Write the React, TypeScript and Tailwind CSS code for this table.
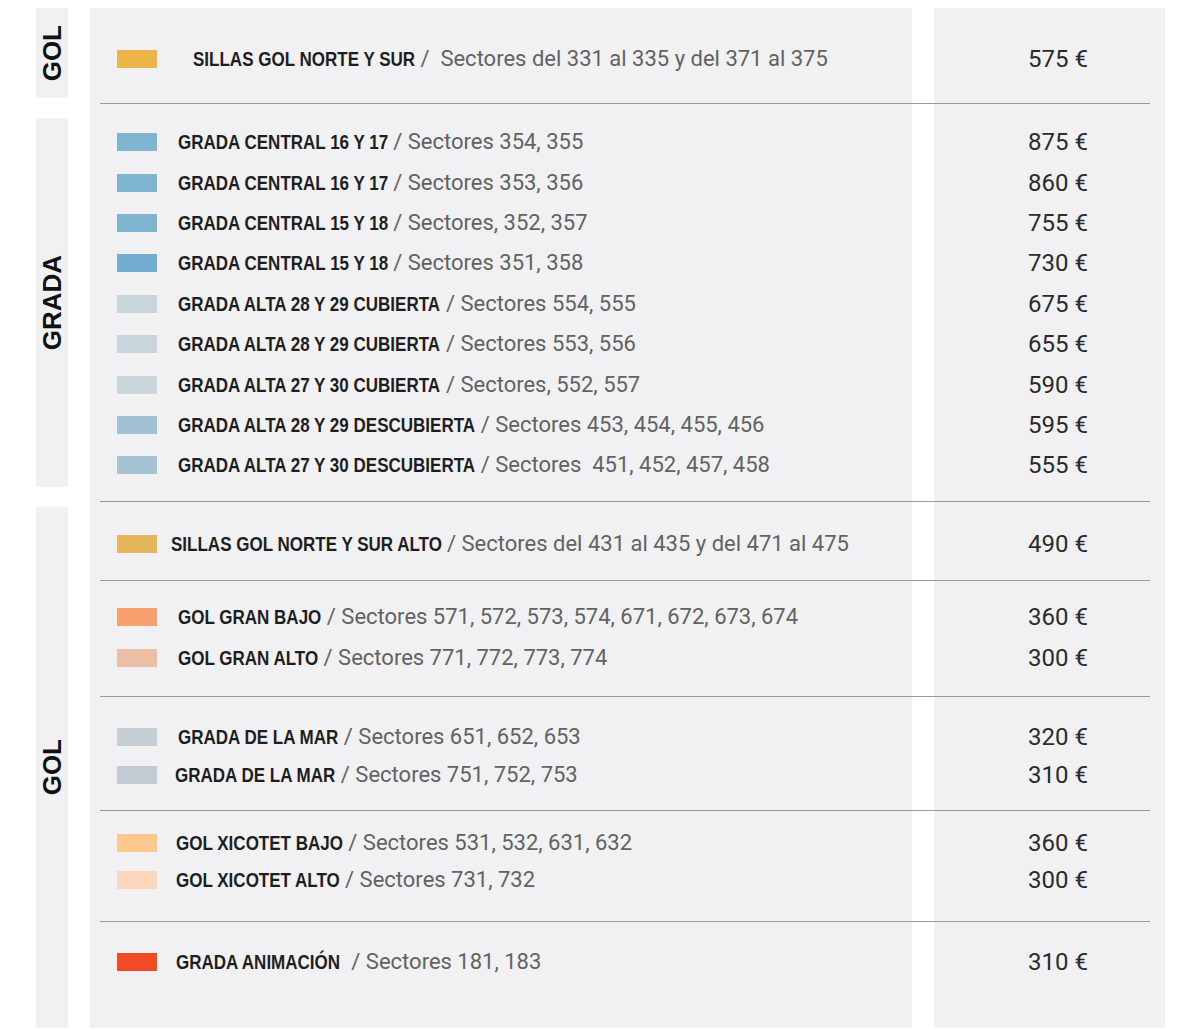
import React, { useLayoutEffect, useRef, useState } from "react";

type Row = {
  color: string;
  name: string;
  sectors: string;
  price: string;
  indent: string;
};

type Group = {
  height: string;
  pad: string;
  rowH: string;
  rows: Row[];
};

const groups: Group[] = [
  {
    height: "h-[95px]",
    pad: "pt-[31px]",
    rowH: "h-[40px]",
    rows: [
      {
        color: "bg-[#ebb54b]",
        name: "SILLAS GOL NORTE Y SUR",
        sectors: " /  Sectores del 331 al 335 y del 371 al 375",
        price: "575 €",
        indent: "ml-[36px]",
      },
    ],
  },
  {
    height: "h-[397px]",
    pad: "pt-[18px]",
    rowH: "h-[40.4px]",
    rows: [
      { color: "bg-[#80b5d1]", name: "GRADA CENTRAL 16 Y 17", sectors: " / Sectores 354, 355", price: "875 €", indent: "ml-[21px]" },
      { color: "bg-[#80b5d1]", name: "GRADA CENTRAL 16 Y 17", sectors: " / Sectores 353, 356", price: "860 €", indent: "ml-[21px]" },
      { color: "bg-[#80b5d1]", name: "GRADA CENTRAL 15 Y 18", sectors: " / Sectores, 352, 357", price: "755 €", indent: "ml-[21px]" },
      { color: "bg-[#72acd1]", name: "GRADA CENTRAL 15 Y 18", sectors: " / Sectores 351, 358", price: "730 €", indent: "ml-[21px]" },
      { color: "bg-[#c8d6dc]", name: "GRADA ALTA 28 Y 29 CUBIERTA", sectors: " / Sectores 554, 555", price: "675 €", indent: "ml-[21px]" },
      { color: "bg-[#c8d5da]", name: "GRADA ALTA 28 Y 29 CUBIERTA", sectors: " / Sectores 553, 556", price: "655 €", indent: "ml-[21px]" },
      { color: "bg-[#cbd6da]", name: "GRADA ALTA 27 Y 30 CUBIERTA", sectors: " / Sectores, 552, 557", price: "590 €", indent: "ml-[21px]" },
      { color: "bg-[#a0c2d2]", name: "GRADA ALTA 28 Y 29 DESCUBIERTA", sectors: " / Sectores 453, 454, 455, 456", price: "595 €", indent: "ml-[21px]" },
      { color: "bg-[#a6c3d3]", name: "GRADA ALTA 27 Y 30 DESCUBIERTA", sectors: " / Sectores  451, 452, 457, 458", price: "555 €", indent: "ml-[21px]" },
    ],
  },
  {
    height: "h-[78px]",
    pad: "pt-[22px]",
    rowH: "h-[40px]",
    rows: [
      { color: "bg-[#e8b65a]", name: "SILLAS GOL NORTE Y SUR ALTO", sectors: " / Sectores del 431 al 435 y del 471 al 475", price: "490 €", indent: "ml-[14px]" },
    ],
  },
  {
    height: "h-[115px]",
    pad: "pt-[15px]",
    rowH: "h-[41px]",
    rows: [
      { color: "bg-[#f9a070]", name: "GOL GRAN BAJO", sectors: " / Sectores 571, 572, 573, 574, 671, 672, 673, 674", price: "360 €", indent: "ml-[21px]" },
      { color: "bg-[#ebbfa5]", name: "GOL GRAN ALTO", sectors: " / Sectores 771, 772, 773, 774", price: "300 €", indent: "ml-[21px]" },
    ],
  },
  {
    height: "h-[113px]",
    pad: "pt-[21px]",
    rowH: "h-[38px]",
    rows: [
      { color: "bg-[#c6cfd3]", name: "GRADA DE LA MAR", sectors: " / Sectores 651, 652, 653", price: "320 €", indent: "ml-[21px]" },
      { color: "bg-[#c2cbd1]", name: "GRADA DE LA MAR", sectors: " / Sectores 751, 752, 753", price: "310 €", indent: "ml-[18px]" },
    ],
  },
  {
    height: "h-[110px]",
    pad: "pt-[13px]",
    rowH: "h-[37px]",
    rows: [
      { color: "bg-[#fdc88e]", name: "GOL XICOTET BAJO", sectors: " / Sectores 531, 532, 631, 632", price: "360 €", indent: "ml-[19px]" },
      { color: "bg-[#fcd7bd]", name: "GOL XICOTET ALTO", sectors: " / Sectores 731, 732", price: "300 €", indent: "ml-[19px]" },
    ],
  },
  {
    height: "h-[106px]",
    pad: "pt-[20px]",
    rowH: "h-[40px]",
    rows: [
      { color: "bg-[#f04a26]", name: "GRADA ANIMACIÓN", sectors: "  / Sectores 181, 183", price: "310 €", indent: "ml-[19px]" },
    ],
  },
];

// no condensed face is installed, so squeeze the bold name and give the
// box the narrowed width so the sectors text follows right after it
const SQUEEZE = 0.81;

function Narrow({ children }: { children: string }) {
  const ref = useRef<HTMLSpanElement>(null);
  const [width, setWidth] = useState<number | null>(null);

  useLayoutEffect(() => {
    if (ref.current) setWidth(ref.current.offsetWidth * SQUEEZE);
  }, [children]);

  return (
    <span className="inline-block" style={width ? { width } : undefined}>
      <span
        ref={ref}
        className="inline-block whitespace-pre origin-left scale-x-[0.81] font-['Liberation_Sans',sans-serif] font-bold text-[21px] text-[#1e1e1e]"
      >
        {children}
      </span>
    </span>
  );
}

function SideLabel({ text, height }: { text: string; height: string }) {
  return (
    <div className={`w-8 ${height} bg-[#f1f1f3] flex items-center justify-center`}>
      <span className="[writing-mode:vertical-rl] rotate-180 font-['Liberation_Sans',sans-serif] font-bold text-[26px] leading-none text-[#111]">
        {text}
      </span>
    </div>
  );
}

function PriceRow({ row, rowH }: { row: Row; rowH: string }) {
  return (
    <div className={`flex items-center ${rowH}`}>
      <div className="w-[822px] flex items-center">
        <div className={`ml-[27px] w-10 h-[18px] shrink-0 ${row.color}`} />
        <p className={`${row.indent} whitespace-pre leading-none`}>
          <Narrow>{row.name}</Narrow>
          <span className="font-['Roboto',sans-serif] text-[22px] text-[#626262]">
            {row.sectors}
          </span>
        </p>
      </div>
      <div className="ml-[22px] w-[231px] pr-[77px] text-right font-['Roboto',sans-serif] text-[24px] leading-none text-[#2b2b2b]">
        {row.price}
      </div>
    </div>
  );
}

export default function App() {
  return (
    <div className="w-[1200px] h-[1030px] bg-white flex gap-[22px] pt-2 pl-9">
      <div className="flex flex-col gap-5">
        <SideLabel text="GOL" height="h-[90px]" />
        <SideLabel text="GRADA" height="h-[369px]" />
        <SideLabel text="GOL" height="h-[521px]" />
      </div>
      <div className="w-[1075px] h-[1020px] flex flex-col bg-[linear-gradient(to_right,#f1f1f3_822px,#ffffff_822px,#ffffff_844px,#f1f1f3_844px)]">
        {groups.map((group, i) => (
          <React.Fragment key={i}>
            {i > 0 && <div className="h-px ml-[10px] mr-[15px] bg-[#9a9a9a] shrink-0" />}
            <div className={`${group.height} ${group.pad} shrink-0`}>
              {group.rows.map((row, j) => (
                <PriceRow key={j} row={row} rowH={group.rowH} />
              ))}
            </div>
          </React.Fragment>
        ))}
      </div>
    </div>
  );
}
